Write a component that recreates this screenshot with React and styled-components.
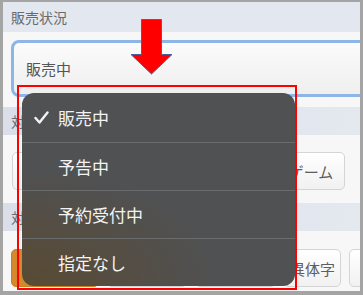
import React from 'react';
import styled, { createGlobalStyle } from 'styled-components';

const GlobalStyle = createGlobalStyle`
  html, body {
    margin: 0;
    padding: 0;
    background: #a4a4a4;
  }
  body {
    font-family: "Noto Sans CJK JP", "Noto Sans", sans-serif;
  }
`;

const Frame = styled.div`
  position: relative;
  width: 363px;
  height: 295px;
  box-sizing: border-box;
  padding: 2px 3px 4px 3px;
  background: #a4a4a4;
`;

const Screen = styled.div`
  height: 100%;
  overflow: hidden;
  background: #f7f7f7;
  display: flex;
  flex-direction: column;
`;

const SectionHead = styled.div`
  height: ${p => p.$h}px;
  flex: none;
  display: flex;
  align-items: center;
  padding-left: 8px;
  font-size: 14px;
  color: #6a6a6a;
  background: ${p => p.$grad ? 'linear-gradient(90deg, #d9dee8, #e4e8ef)' : '#e2e7f0'};
`;

const InputArea = styled.div`
  height: 75px;
  flex: none;
  box-sizing: border-box;
  padding: 8px 0 10px 8px;
  background: #f7f7f7;
`;

const SelectBox = styled.div`
  width: 380px;
  height: 57px;
  box-sizing: border-box;
  border: 3px solid #8db5e8;
  border-radius: 8px;
  background: linear-gradient(180deg, #fbfbfb, #efefef);
  display: flex;
  align-items: center;
  padding-left: 12px;
  font-size: 15px;
  color: #555;
`;

const ButtonRow = styled.div`
  height: ${p => p.$h}px;
  flex: none;
  box-sizing: border-box;
  padding: ${p => p.$top}px 0 0 ${p => p.$left}px;
  display: flex;
  gap: 8px;
  background: #f7f7f7;
`;

const Chip = styled.div`
  flex: none;
  width: ${p => p.$w}px;
  height: 38px;
  box-sizing: border-box;
  border: 1px solid ${p => p.$on ? '#c97f22' : '#d4d4d4'};
  border-radius: 5px;
  background: ${p => p.$on ? '#d48a2c' : 'linear-gradient(180deg, #ffffff, #f1f1f1)'};
  color: ${p => p.$on ? '#fff' : '#5e5e5e'};
  font-size: 15px;
  display: flex;
  align-items: center;
  justify-content: center;
  white-space: nowrap;
  overflow: hidden;
`;

const Highlight = styled.div`
  position: absolute;
  left: 17px;
  top: 85px;
  width: 280px;
  height: 205px;
  box-sizing: border-box;
  border: 2px solid #ff0000;
`;

const Menu = styled.ul`
  position: absolute;
  left: 22px;
  top: 93px;
  width: 273px;
  height: 193px;
  margin: 0;
  padding: 0;
  list-style: none;
  border-radius: 12px;
  overflow: hidden;
  background:
    radial-gradient(ellipse 200px 120px at 0% 100%, rgba(92, 72, 40, 0.75), rgba(92, 72, 40, 0) 100%),
    #505153;
`;

const MenuItem = styled.li`
  height: ${p => p.$first ? 49 : 48}px;
  box-sizing: border-box;
  display: flex;
  align-items: center;
  padding-left: 36px;
  font-size: 17px;
  color: #f3f3f3;
  border-top: ${p => p.$first ? 'none' : '1px solid #6a6b6d'};
  position: relative;
`;

const Check = styled.svg`
  position: absolute;
  left: 12px;
  top: 18px;
`;

const Arrow = styled.svg`
  position: absolute;
  left: 130px;
  top: 18px;
`;

const options = ['販売中', '予告中', '予約受付中', '指定なし'];

export default function App() {
  return (
    <>
      <GlobalStyle />
      <Frame>
        <Screen>
          <SectionHead $h={30}>販売状況</SectionHead>
          <InputArea>
            <SelectBox>販売中</SelectBox>
          </InputArea>
          <SectionHead $h={28} $grad>対象商品</SectionHead>
          <ButtonRow $h={68} $top={17} $left={9}>
            <Chip $w={80}>すべて</Chip>
            <Chip $w={76}>本</Chip>
            <Chip $w={85}>コミック</Chip>
            <Chip $w={68}>ゲーム</Chip>
          </ButtonRow>
          <SectionHead $h={28} $grad>対象文字</SectionHead>
          <ButtonRow $h={80} $top={18} $left={8}>
            <Chip $w={88} $on>すべて</Chip>
            <Chip $w={80}>常用</Chip>
            <Chip $w={81}>旧字体</Chip>
            <Chip $w={57}>異体字</Chip>
            <Chip $w={70}>その他</Chip>
          </ButtonRow>
        </Screen>

        <Highlight />

        <Menu>
          {options.map((o, i) => (
            <MenuItem key={o} $first={i === 0}>
              {i === 0 && (
                <Check width="15" height="13" viewBox="0 0 15 13">
                  <polyline points="1.5,7 5.5,11.5 13.5,1.5" fill="none" stroke="#f3f3f3" strokeWidth="2.4" strokeLinecap="round" strokeLinejoin="round" />
                </Check>
              )}
              {o}
            </MenuItem>
          ))}
        </Menu>

        <Arrow width="44" height="58" viewBox="0 0 44 58">
          <polygon points="11.5,1.5 31.5,1.5 31.5,36.5 42,36.5 21.5,56 1,36.5 11.5,36.5" fill="#ff0000" stroke="#4a5f9c" strokeWidth="1" />
        </Arrow>
      </Frame>
    </>
  );
}
